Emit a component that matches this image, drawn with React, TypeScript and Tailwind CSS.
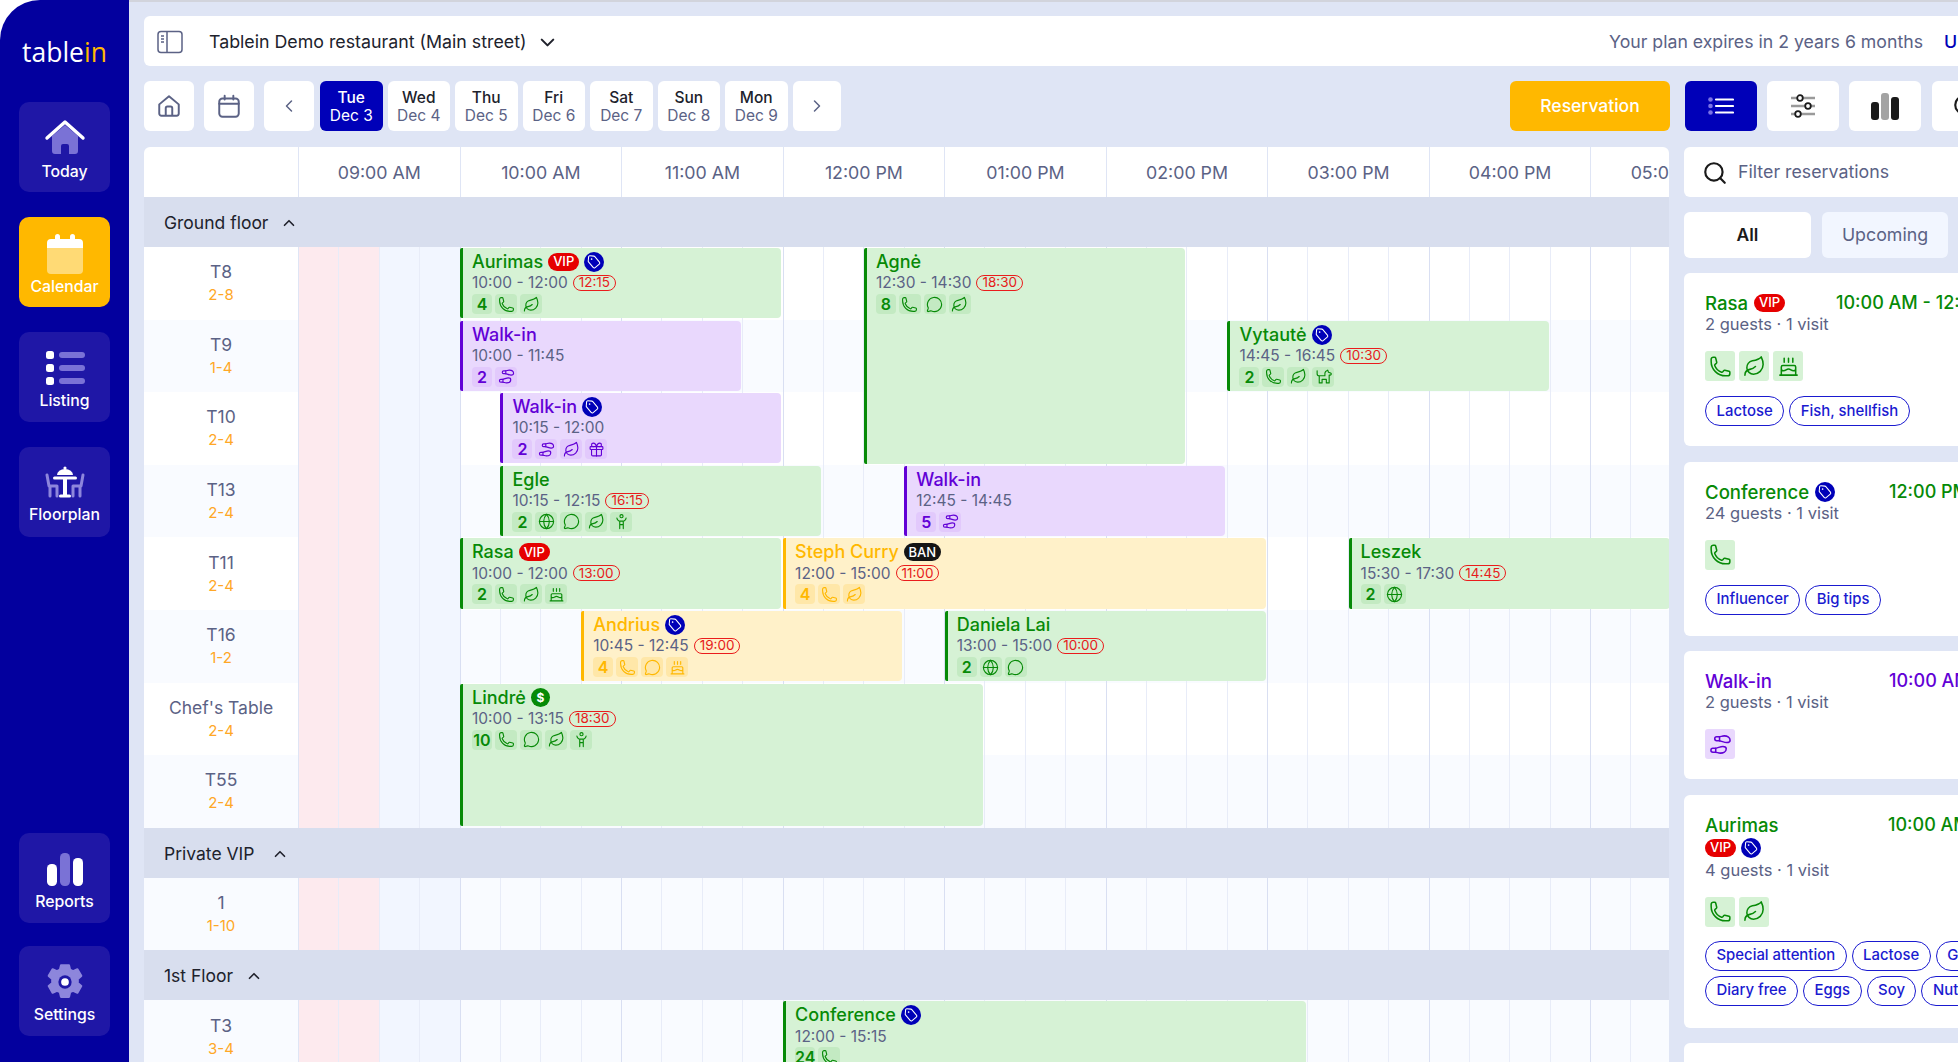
import { ChevronDown, ChevronLeft, ChevronRight, ChevronUp, Footprints, Gift, Globe, Leaf, MessageCircle, Search, Tag } from "lucide-react";
import type { ReactNode } from "react";

type Tone = "green" | "purple" | "yellow";
type IconName = "phone" | "leaf" | "chat" | "globe" | "steps" | "gift" | "cake" | "person" | "dog";

interface IEvent {
  name: string;
  time: string;
  row: number;
  span?: number;
  start: number;
  end: number;
  tone: Tone;
  badges?: string[];
  due?: string;
  guests: string;
  icons: IconName[];
}

const tones = {
  green: { box: "bg-[#d6f2d5] border-[#078a07]", name: "text-[#078a07]", chip: "bg-[#c3eac2] text-[#078a07]" },
  purple: { box: "bg-[#e9d8fd] border-[#6200d6]", name: "text-[#6200d6]", chip: "bg-[#e2c9fc] text-[#6200d6]" },
  yellow: { box: "bg-[#fff1c9] border-[#ffb800]", name: "text-[#ffb800]", chip: "bg-[#ffe7a8] text-[#ffb800]" },
};

const hours = ["09:00 AM", "10:00 AM", "11:00 AM", "12:00 PM", "01:00 PM", "02:00 PM", "03:00 PM", "04:00 PM", "05:00 PM"];
const cells = Array.from({ length: 34 }, (_, i) => i);

const groundRows = [
  { name: "T8", seats: "2-8" },
  { name: "T9", seats: "1-4" },
  { name: "T10", seats: "2-4" },
  { name: "T13", seats: "2-4" },
  { name: "T11", seats: "2-4" },
  { name: "T16", seats: "1-2" },
  { name: "Chef's Table", seats: "2-4" },
  { name: "T55", seats: "2-4" },
];

const groundEvents: IEvent[] = [
  { name: "Aurimas", time: "10:00 - 12:00", row: 0, start: 600, end: 720, tone: "green", badges: ["vip", "tag"], due: "12:15", guests: "4", icons: ["phone", "leaf"] },
  { name: "Agnė", time: "12:30 - 14:30", row: 0, span: 3, start: 750, end: 870, tone: "green", due: "18:30", guests: "8", icons: ["phone", "chat", "leaf"] },
  { name: "Walk-in", time: "10:00 - 11:45", row: 1, start: 600, end: 705, tone: "purple", guests: "2", icons: ["steps"] },
  { name: "Vytautė", time: "14:45 - 16:45", row: 1, start: 885, end: 1005, tone: "green", badges: ["tag"], due: "10:30", guests: "2", icons: ["phone", "leaf", "dog"] },
  { name: "Walk-in", time: "10:15 - 12:00", row: 2, start: 615, end: 720, tone: "purple", badges: ["tag"], guests: "2", icons: ["steps", "leaf", "gift"] },
  { name: "Egle", time: "10:15 - 12:15", row: 3, start: 615, end: 735, tone: "green", due: "16:15", guests: "2", icons: ["globe", "chat", "leaf", "person"] },
  { name: "Walk-in", time: "12:45 - 14:45", row: 3, start: 765, end: 885, tone: "purple", guests: "5", icons: ["steps"] },
  { name: "Rasa", time: "10:00 - 12:00", row: 4, start: 600, end: 720, tone: "green", badges: ["vip"], due: "13:00", guests: "2", icons: ["phone", "leaf", "cake"] },
  { name: "Steph Curry", time: "12:00 - 15:00", row: 4, start: 720, end: 900, tone: "yellow", badges: ["ban"], due: "11:00", guests: "4", icons: ["phone", "leaf"] },
  { name: "Leszek", time: "15:30 - 17:30", row: 4, start: 930, end: 1050, tone: "green", due: "14:45", guests: "2", icons: ["globe"] },
  { name: "Andrius", time: "10:45 - 12:45", row: 5, start: 645, end: 765, tone: "yellow", badges: ["tag"], due: "19:00", guests: "4", icons: ["phone", "chat", "cake"] },
  { name: "Daniela Lai", time: "13:00 - 15:00", row: 5, start: 780, end: 900, tone: "green", due: "10:00", guests: "2", icons: ["globe", "chat"] },
  { name: "Lindrė", time: "10:00 - 13:15", row: 6, span: 2, start: 600, end: 795, tone: "green", badges: ["money"], due: "18:30", guests: "10", icons: ["phone", "chat", "leaf", "person"] },
];

const conference: IEvent = { name: "Conference", time: "12:00 - 15:15", row: 0, start: 720, end: 915, tone: "green", badges: ["tag"], guests: "24", icons: ["phone"] };

const Stroke = ({ className, children }: { className?: string; children: ReactNode }) => (
  <svg viewBox="0 0 24 24" fill="none" stroke="currentColor" strokeWidth={1.6} strokeLinecap="round" strokeLinejoin="round" className={className}>
    {children}
  </svg>
);

const AppIcon = ({ name, className }: { name: IconName; className: string }) => {
  if (name === "phone")
    return (
      <Stroke className={className}>
        <path d="M2.25 6.75c0 8.284 6.716 15 15 15h2.25a2.25 2.25 0 002.25-2.25v-1.372c0-.516-.351-.966-.852-1.091l-4.423-1.106c-.44-.11-.902.055-1.173.417l-.97 1.293c-.282.376-.769.542-1.21.38a12.035 12.035 0 01-7.143-7.143c-.162-.441.004-.928.38-1.21l1.293-.97c.363-.271.527-.734.417-1.173L6.963 3.102a1.125 1.125 0 00-1.091-.852H4.5A2.25 2.25 0 002.25 4.5v2.25z" />
      </Stroke>
    );
  if (name === "leaf") return <Leaf className={className} strokeWidth={1.6} />;
  if (name === "chat") return <MessageCircle className={className} strokeWidth={1.6} />;
  if (name === "globe") return <Globe className={className} strokeWidth={1.6} />;
  if (name === "steps") return <Footprints className={`${className} rotate-90`} strokeWidth={1.6} />;
  if (name === "gift") return <Gift className={className} strokeWidth={1.6} />;
  if (name === "cake")
    return (
      <Stroke className={className}>
        <path d="M3 21h18M4.5 21v-8.5A1.5 1.5 0 0 1 6 11h12a1.5 1.5 0 0 1 1.5 1.5V21M4.5 15.5c1.5 1.4 3 1.4 5 0 2-1.4 3-1.4 5 0 2 1.4 3.500 1.400 5 0M7.500 3.500v4M12 3.500v4M16.500 3.500v4" />
      </Stroke>
    );
  if (name === "dog")
    return (
      <Stroke className={className}>
        <path d="M3 4v4a3 3 0 0 0 3 3v10h4v-5h6v5h4V10h1.500a1.500 1.500 0 0 0 .5-2.900L19 6l-1-3-3 2-1 2v4H6" />
      </Stroke>
    );
  return (
    <Stroke className={className}>
      <circle cx="12" cy="4.500" r="2.200" />
      <path d="M5.500 7c.3 3 3 4.500 4 4.500h5c1 0 3.700-1.500 4-4.500M9.500 11.500V22M14.500 11.500V22M9.500 16.500h5" />
    </Stroke>
  );
};

const TagBadge = () => (
  <span className="flex h-[20px] w-[20px] items-center justify-center rounded-full bg-[#0000b8] text-white">
    <Tag className="h-[14px] w-[14px] rotate-[5deg]" strokeWidth={1.8} />
  </span>
);

const VipBadge = () => (
  <span className="flex h-[18px] w-[31px] items-center justify-center rounded-full bg-[#e60000] text-[13px] font-medium text-white">VIP</span>
);

const Badge = ({ kind }: { kind: string }) => {
  if (kind === "vip") return <VipBadge />;
  if (kind === "tag") return <TagBadge />;
  if (kind === "ban")
    return <span className="flex h-[18px] w-[37px] items-center justify-center rounded-full bg-[#151515] text-[13px] font-medium text-white">BAN</span>;
  return <span className="flex h-[19px] w-[19px] items-center justify-center rounded-full bg-[#078a07] text-[12px] font-bold text-white">$</span>;
};

const EventCard = ({ event, top }: { event: IEvent; top: number }) => {
  const tone = tones[event.tone];
  const left = 316 + ((event.start - 600) / 60) * 161.56;
  const width = ((event.end - event.start) / 60) * 161.56 - 2;
  const height = (event.span ?? 1) * 72.6 - 2.3;

  return (
    <div
      className={`absolute overflow-hidden rounded-r-[4px] rounded-l-[2px] border-l-[3px] pl-[9px] ${tone.box}`}
      style={{ left, width, height, top: top + event.row * 72.6 }}
    >
      <div className="flex h-[26px] items-center gap-[5px] pt-[2px]">
        <span className={`text-[18px] leading-none font-medium whitespace-nowrap ${tone.name}`}>{event.name}</span>
        {event.badges?.map((b) => <Badge key={b} kind={b} />)}
      </div>
      <div className="flex h-[18px] items-center gap-[5px]">
        <span className="text-[15.5px] leading-none whitespace-nowrap text-[#5b6285]">{event.time}</span>
        {event.due && (
          <span className="flex h-[16px] items-center rounded-full border-[1.5px] border-[#ea1c1c] px-[5px] text-[13.5px] leading-none text-[#e61b1b]">{event.due}</span>
        )}
      </div>
      <div className="mt-[2px] flex gap-[3px]">
        <span className={`flex h-[20px] min-w-[20px] items-center justify-center rounded-[4px] text-[16px] leading-none font-semibold ${tone.chip}`}>{event.guests}</span>
        {event.icons.map((icon, i) => (
          <span key={i} className={`flex h-[20px] w-[22px] items-center justify-center rounded-[4px] ${tone.chip}`}>
            <AppIcon name={icon} className="h-[17px] w-[17px]" />
          </span>
        ))}
      </div>
    </div>
  );
};

const RowLabel = ({ name, seats }: { name: string; seats: string }) => (
  <div className="flex w-[155px] shrink-0 flex-col items-center justify-center border-r border-[#dfe5f5]">
    <span className="text-[17.5px] leading-[23px] text-[#5b6285]">{name}</span>
    <span className="text-[15px] leading-[23px] text-[#ffa726]">{seats}</span>
  </div>
);

const Row = ({ name, seats, alt }: { name: string; seats: string; alt: boolean }) => (
  <div className={`flex h-[72.6px] ${alt ? "bg-[#f9fbff]" : "bg-white"}`}>
    <RowLabel name={name} seats={seats} />
    {cells.map((c) => (
      <div
        key={c}
        className={`h-full w-[40.39px] shrink-0 border-r ${c % 4 === 3 ? "border-[#d9dff2]" : "border-[#e8ecf8]"} ${
          c < 2 ? "bg-[#fdeaee]" : c < 4 ? "bg-[#f2f6ff]" : ""
        }`}
      />
    ))}
  </div>
);

const SectionHeader = ({ title, gap }: { title: string; gap: string }) => (
  <div className={`flex h-[50px] items-center bg-[#d8deee] pt-[2px] pl-[20px] text-[17.5px] text-[#20222c] ${gap}`}>
    {title}
    <ChevronUp className="h-[18px] w-[18px]" strokeWidth={2.2} />
  </div>
);

const NavItem = ({ label, active, children, className, labelClass }: { label: string; active?: boolean; children: ReactNode; className?: string; labelClass?: string }) => (
  <div
    className={`flex h-[90px] w-[91px] flex-col items-center rounded-[10px] pt-[14px] ${active ? "bg-[#ffb800]" : "bg-[#1f17a6]"} ${className ?? ""}`}
  >
    <div className="flex h-[44px] items-center justify-center">{children}</div>
    <span className={`text-[15.8px] leading-[20px] font-medium text-white ${labelClass ?? "mt-[2px]"}`}>{label}</span>
  </div>
);

const ToolButton = ({ className, children }: { className: string; children: ReactNode }) => (
  <div className={`flex h-[50px] shrink-0 items-center justify-center rounded-[6px] ${className}`}>{children}</div>
);

const DayButton = ({ day, date, active }: { day: string; date: string; active?: boolean }) => (
  <div className={`flex h-[50px] w-[62.5px] shrink-0 flex-col items-center justify-center rounded-[6px] pt-[2px] ${active ? "bg-[#0000b8] text-white" : "bg-white"}`}>
    <span className={`text-[15.5px] leading-[18px] font-medium ${active ? "text-white" : "text-[#20222c]"}`}>{day}</span>
    <span className={`text-[15.5px] leading-[18px] ${active ? "text-white" : "text-[#5b6285]"}`}>{date}</span>
  </div>
);

const CardIcon = ({ name, tone }: { name: IconName; tone: "green" | "purple" }) => (
  <span className={`flex h-[30px] w-[30px] items-center justify-center rounded-[3px] ${tone === "green" ? "bg-[#d6f2d5] text-[#078a07]" : "bg-[#e9d8fd] text-[#6200d6]"}`}>
    <AppIcon name={name} className="h-[23px] w-[23px]" />
  </span>
);

const Pill = ({ text }: { text: string }) => (
  <span className="flex h-[30px] shrink-0 items-center rounded-full border-[1.5px] border-[#1a1ad0] px-[10.500px] text-[14.9px] font-medium whitespace-nowrap text-[#1a1ad0]">{text}</span>
);

const ResCard = ({ name, nameClass, badges, guests, time, nameWidth, icons, tone, className, children }: {
  name: string;
  nameClass: string;
  badges: ReactNode;
  guests: string;
  time: string;
  nameWidth: string;
  icons: IconName[];
  tone: "green" | "purple";
  className: string;
  children?: ReactNode;
}) => (
  <div className={`w-[330px] shrink-0 overflow-hidden rounded-[6px] bg-white pt-[19px] pl-[21px] ${className}`}>
    <div className="flex">
      <div className={`shrink-0 ${nameWidth}`}>
        <div className="flex flex-wrap items-center gap-x-[6px]">
          <span className={`text-[18.6px] leading-[22px] font-medium ${nameClass}`}>{name}</span>
          {badges}
        </div>
        <div className="text-[16.5px] leading-[20px] text-[#5b6285]">{guests}</div>
      </div>
      <div className={`text-[18px] leading-[22px] font-medium whitespace-nowrap ${nameClass}`}>{time}</div>
    </div>
    <div className="mt-[17px] flex gap-[4px]">
      {icons.map((icon) => <CardIcon key={icon} name={icon} tone={tone} />)}
    </div>
    {children}
  </div>
);

export default function App() {
  return (
    <div className="flex h-[1062px] w-[1958px] overflow-hidden bg-white font-['Inter',sans-serif]">
      <aside className="flex w-[129px] shrink-0 flex-col items-center rounded-tl-[40px] bg-[#03009e] pb-[26px]">
        <div className="mt-[33px] h-[38px] font-['Open_Sans',sans-serif] text-[26.500px] leading-[38px] font-normal text-white">
          table<span className="text-[#ffb800]">in</span>
        </div>
        <NavItem label="Today" className="mt-[31px]">
          <svg viewBox="0 0 44 40" className="h-[40px] w-[44px]">
            <path d="M9 18 22 7l13 11v15a3 3 0 0 1-3 3h-6v-8a2 2 0 0 0-2-2h-4a2 2 0 0 0-2 2v8h-6a3 3 0 0 1-3-3z" fill="#7a72d6" />
            <path d="M4 20 22 4l18 16" fill="none" stroke="#fff" strokeWidth={3.4} strokeLinecap="round" strokeLinejoin="round" />
          </svg>
        </NavItem>
        <NavItem label="Calendar" active className="mt-[25px]">
          <svg viewBox="0 0 40 44" className="h-[44px] w-[40px]">
            <path d="M2 12a4 4 0 0 1 4-4h28a4 4 0 0 1 4 4v5H2z" fill="#fff" />
            <rect x="10" y="3" width="5" height="9" rx="2.5" fill="#fff" />
            <rect x="25" y="3" width="5" height="9" rx="2.5" fill="#fff" />
            <path d="M2 17h36v22a4 4 0 0 1-4 4H6a4 4 0 0 1-4-4z" fill="#ffda75" />
          </svg>
        </NavItem>
        <NavItem label="Listing" className="mt-[25px]" labelClass="mt-[1px]">
          <svg viewBox="0 0 44 40" className="h-[40px] w-[44px]">
            <rect x="3" y="3" width="8" height="8" rx="2.5" fill="#fff" />
            <rect x="3" y="16" width="8" height="8" rx="2.5" fill="#fff" />
            <rect x="3" y="29" width="8" height="8" rx="2.5" fill="#fff" />
            <rect x="16" y="4" width="26" height="6" rx="3" fill="#7a72d6" />
            <rect x="16" y="17" width="26" height="6" rx="3" fill="#7a72d6" />
            <rect x="16" y="30" width="26" height="6" rx="3" fill="#7a72d6" />
          </svg>
        </NavItem>
        <NavItem label="Floorplan" className="mt-[25px]" labelClass="mt-0">
          <svg viewBox="0 0 40 32" className="-mt-[3px] h-[32px] w-[40px]">
            <path d="M2 9l2 11h8v10M5 20v10" fill="none" stroke="#8d86dc" strokeWidth={3} strokeLinecap="round" strokeLinejoin="round" />
            <path d="M38 9l-2 11h-8v10M35 20v10" fill="none" stroke="#8d86dc" strokeWidth={3} strokeLinecap="round" strokeLinejoin="round" />
            <path d="M12 9a8 6 0 0 1 16 0z" fill="#fff" />
            <circle cx="20" cy="2" r="1.6" fill="#fff" />
            <rect x="8" y="10.500" width="24" height="3" rx="1.5" fill="#fff" />
            <rect x="18" y="13" width="4" height="17" fill="#fff" />
            <rect x="14" y="28.500" width="12" height="3" rx="1.5" fill="#fff" />
          </svg>
        </NavItem>
        <NavItem label="Reports" className="mt-auto" labelClass="mt-[1px]">
          <svg viewBox="0 0 38 34" className="h-[34px] w-[38px]">
            <rect x="1" y="12" width="10" height="22" rx="4.5" fill="#fff" />
            <rect x="14" y="1" width="10" height="33" rx="4.5" fill="#7a72d6" />
            <rect x="27" y="6" width="10" height="28" rx="4.5" fill="#fff" />
          </svg>
        </NavItem>
        <NavItem label="Settings" className="mt-[23px]" labelClass="mt-[1px]">
          <svg viewBox="0 0 24 24" className="h-[42px] w-[42px]">
            <path
              fill="#8d86dc"
              stroke="#8d86dc"
              strokeWidth={1.2}
              strokeLinejoin="round"
              d="M9.7 2.500h4.600l.6 2.500 1.700.8 2.500-1.100 2.200 3.800-2 1.700v2.400l2 1.700-2.200 3.800-2.500-1.100-1.700.8-.6 2.700H9.700l-.6-2.700-1.700-.8-2.500 1.100-2.200-3.800 2-1.700v-2.400l-2-1.700 2.200-3.800 2.500 1.100 1.700-.8z"
            />
            <circle cx="12" cy="12" r="3.800" fill="#1f17a6" />
            <circle cx="12" cy="12" r="2.200" fill="#fff" />
          </svg>
        </NavItem>
      </aside>

      <main className="min-w-0 flex-1 bg-[#dfe5f5] pl-[15px]">
        <div className="-ml-[15px] h-[2px] bg-[#d2d4dc]" />
        <header className="mt-[14px] flex h-[50px] w-[1860px] items-center rounded-[6px] bg-white pt-[2px] pl-[13px]">
          <svg viewBox="0 0 26 24" fill="none" stroke="#5b6285" strokeWidth={1.5} className="h-[24px] w-[26px]">
            <rect x="1" y="1.5" width="24" height="21" rx="3" />
            <path d="M10 1.5v21M4 6h3M4 9h3M4 12h3" />
          </svg>
          <span className="ml-[26px] text-[17.800px] text-[#20222c]">Tablein Demo restaurant (Main street)</span>
          <ChevronDown className="ml-[9px] h-[23px] w-[23px] text-[#20222c]" strokeWidth={2.2} />
          <span className="ml-auto text-[17.700px] text-[#5b6285]">Your plan expires in 2 years 6 months</span>
          <span className="ml-[21px] w-[60px] text-[17.800px] font-medium whitespace-nowrap text-[#0000b8]">Upgrade</span>
        </header>

        <div className="mt-[15px] flex w-[1860px]">
          <ToolButton className="w-[50px] bg-white text-[#5b6285]">
            <svg viewBox="0 0 24 24" fill="none" stroke="currentColor" strokeWidth={1.8} className="h-[26px] w-[26px]">
              <path d="M3 10.5 12 3l9 7.5V19a2 2 0 0 1-2 2H5a2 2 0 0 1-2-2z" strokeLinejoin="round" />
              <path d="M9 21v-7a1.5 1.5 0 0 1 1.5-1.5h3A1.5 1.5 0 0 1 15 14v7" />
            </svg>
          </ToolButton>
          <ToolButton className="ml-[10px] w-[50px] bg-white text-[#5b6285]">
            <svg viewBox="0 0 24 24" fill="none" stroke="currentColor" strokeWidth={1.8} className="h-[26px] w-[26px]">
              <rect x="3" y="5" width="18" height="17" rx="3" />
              <path d="M3 10h18M8 2.5V6M16 2.5V6" strokeLinecap="round" />
            </svg>
          </ToolButton>
          <ToolButton className="ml-[10px] w-[50px] bg-white text-[#5b6285]">
            <ChevronLeft className="h-[20px] w-[20px]" strokeWidth={1.8} />
          </ToolButton>
          <div className="ml-[6px] flex gap-[5px]">
            <DayButton day="Tue" date="Dec 3" active />
            <DayButton day="Wed" date="Dec 4" />
            <DayButton day="Thu" date="Dec 5" />
            <DayButton day="Fri" date="Dec 6" />
            <DayButton day="Sat" date="Dec 7" />
            <DayButton day="Sun" date="Dec 8" />
            <DayButton day="Mon" date="Dec 9" />
          </div>
          <ToolButton className="ml-[5px] w-[48px] bg-white text-[#5b6285]">
            <ChevronRight className="h-[20px] w-[20px]" strokeWidth={1.8} />
          </ToolButton>
          <ToolButton className="ml-auto w-[160px] bg-[#ffb800] text-[17.5px] font-medium text-white">Reservation</ToolButton>
          <ToolButton className="ml-[15px] w-[72px] bg-[#0000b8]">
            <svg viewBox="0 0 26 18" className="h-[18px] w-[26px]">
              <circle cx="2.5" cy="2.5" r="2.3" fill="#7a72e6" />
              <circle cx="2.5" cy="9" r="2.3" fill="#7a72e6" />
              <circle cx="2.5" cy="15.5" r="2.3" fill="#7a72e6" />
              <path d="M8 2.5h17M8 9h17M8 15.5h17" stroke="#fff" strokeWidth={2.2} strokeLinecap="round" />
            </svg>
          </ToolButton>
          <ToolButton className="ml-[10px] w-[72px] bg-white">
            <svg viewBox="0 0 26 24" className="h-[24px] w-[26px]" fill="none">
              <path d="M1 4h24M1 12h24M1 20h24" stroke="#9a9a9a" strokeWidth={2.4} />
              <circle cx="10" cy="4" r="2.8" fill="#fff" stroke="#1a1a1a" strokeWidth={1.8} />
              <circle cx="18" cy="12" r="2.8" fill="#fff" stroke="#1a1a1a" strokeWidth={1.8} />
              <circle cx="8" cy="20" r="2.8" fill="#fff" stroke="#1a1a1a" strokeWidth={1.8} />
            </svg>
          </ToolButton>
          <ToolButton className="ml-[10px] w-[72px] bg-white">
            <svg viewBox="0 0 28 27" className="h-[27px] w-[28px]">
              <rect x="0" y="9" width="8" height="18" rx="3" fill="#1a1a1a" />
              <rect x="10" y="0" width="8" height="27" rx="3" fill="#a3a3a3" />
              <rect x="20" y="4" width="8" height="23" rx="3" fill="#1a1a1a" />
            </svg>
          </ToolButton>
          <ToolButton className="ml-[11px] w-[72px] justify-start bg-white pl-[20px]">
            <Search className="h-[26px] w-[26px] text-[#1a1a1a]" strokeWidth={2} />
          </ToolButton>
        </div>

        <div className="mt-[16px] flex">
          <section className="w-[1525px] shrink-0 overflow-hidden rounded-t-[6px]">
            <div className="flex h-[50px] bg-white">
              <div className="w-[155px] shrink-0 border-r border-[#dfe5f5]" />
              {hours.map((h) => (
                <div key={h} className="flex h-full w-[161.56px] shrink-0 items-center justify-center border-r border-[#dfe5f5] pt-[2px] text-[17.800px] text-[#5b6285]">
                  {h}
                </div>
              ))}
            </div>
            <SectionHeader title="Ground floor" gap="gap-[12px]" />
            <div className="relative">
              {groundRows.map((r, i) => <Row key={r.name} name={r.name} seats={r.seats} alt={i % 2 === 1} />)}
              {groundEvents.map((e) => <EventCard key={e.name + e.start} event={e} top={1} />)}
            </div>
            <SectionHeader title="Private VIP" gap="gap-[17px]" />
            <Row name="1" seats="1-10" alt />
            <SectionHeader title="1st Floor" gap="gap-[12px]" />
            <div className="relative">
              <Row name="T3" seats="3-4" alt />
              <EventCard event={conference} top={1} />
            </div>
          </section>

          <aside className="ml-[15px] w-[330px] shrink-0">
            <div className="flex h-[50px] items-center rounded-[6px] bg-white pt-[1px] pl-[18px]">
              <Search className="h-[26px] w-[26px] text-[#1a1a1a]" strokeWidth={2} />
              <span className="ml-[10px] text-[17.800px] text-[#5b6285]">Filter reservations</span>
            </div>
            <div className="mt-[15px] flex gap-[11px]">
              <div className="flex h-[46px] w-[127px] items-center justify-center rounded-[6px] bg-white pt-[1px] text-[17.5px] font-semibold text-[#1a1a1a]">All</div>
              <div className="flex h-[46px] w-[126px] items-center justify-center rounded-[6px] bg-[#f2f6ff] pt-[1px] text-[17.800px] text-[#5b6285]">Upcoming</div>
            </div>

            <div className="mt-[15px] flex flex-col gap-[15.500px]">
              <ResCard name="Rasa" nameClass="text-[#078a07]" badges={<VipBadge />} guests="2 guests · 1 visit" time="10:00 AM - 12:00 PM" nameWidth="w-[131px]" icons={["phone", "leaf", "cake"]} tone="green" className="h-[173px]">
                <div className="mt-[15px] flex gap-[5px]">
                  <Pill text="Lactose" />
                  <Pill text="Fish, shellfish" />
                </div>
              </ResCard>
              <ResCard name="Conference" nameClass="text-[#078a07]" badges={<TagBadge />} guests="24 guests · 1 visit" time="12:00 PM - 15:15 PM" nameWidth="w-[184px]" icons={["phone"]} tone="green" className="h-[174px]">
                <div className="mt-[15px] flex gap-[5px]">
                  <Pill text="Influencer" />
                  <Pill text="Big tips" />
                </div>
              </ResCard>
              <ResCard name="Walk-in" nameClass="text-[#6200d6]" badges={null} guests="2 guests · 1 visit" time="10:00 AM - 11:45 AM" nameWidth="w-[184px]" icons={["steps"]} tone="purple" className="h-[128px]" />
              <ResCard name="Aurimas" nameClass="text-[#078a07]" badges={<div className="flex h-[24px] basis-full items-center gap-[5px]"><VipBadge /><TagBadge /></div>} guests="4 guests · 1 visit" time="10:00 AM - 12:00 PM" nameWidth="w-[183px]" icons={["phone", "leaf"]} tone="green" className="h-[233px]">
                <div className="mt-[14px] flex gap-[5px]">
                  <Pill text="Special attention" />
                  <Pill text="Lactose" />
                  <Pill text="Gluten" />
                </div>
                <div className="mt-[5px] flex gap-[5px]">
                  <Pill text="Diary free" />
                  <Pill text="Eggs" />
                  <Pill text="Soy" />
                  <Pill text="Nuts" />
                </div>
              </ResCard>
              <div className="h-[60px] w-[330px] rounded-[6px] bg-white" />
            </div>
          </aside>
        </div>
      </main>
    </div>
  );
}
